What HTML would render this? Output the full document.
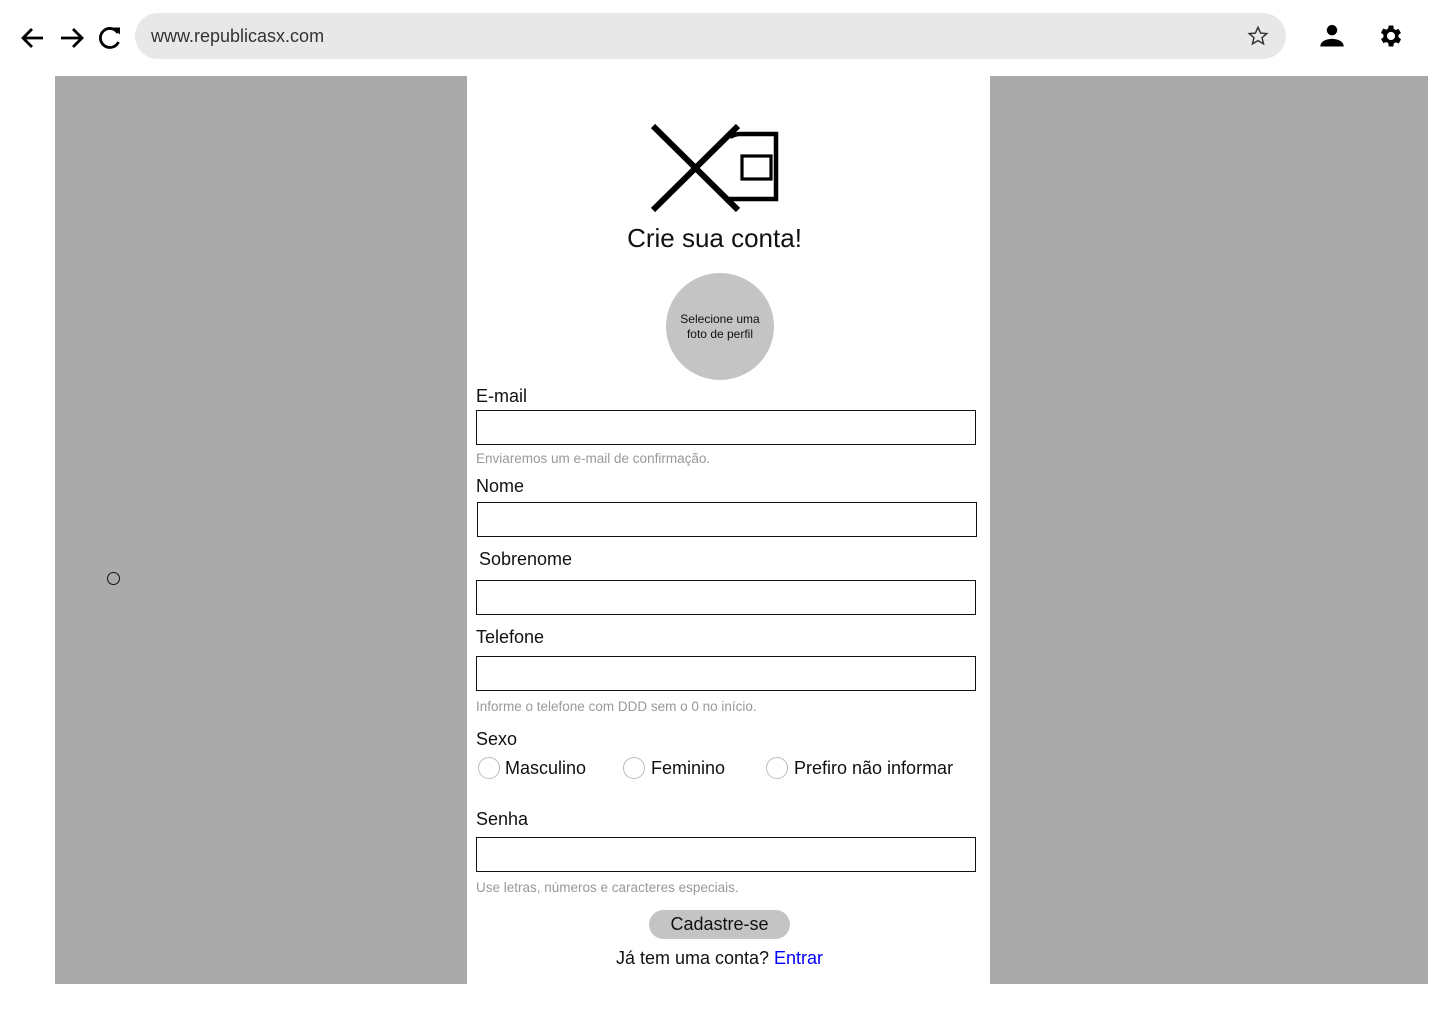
<!DOCTYPE html>
<html><head><meta charset="utf-8"><style>
*{margin:0;padding:0;box-sizing:border-box}
body{width:1440px;height:1024px;background:#fff;position:relative;font-family:"Liberation Sans",sans-serif;color:#111;overflow:hidden}
.a{position:absolute}
.url{left:135px;top:13px;width:1151px;height:46px;background:#e8e8e8;border-radius:23px}
.url span{position:absolute;left:16px;top:13px;font-size:18px;color:#333}
.gray{background:#aaa;top:76px;height:908px}
.lbl{font-size:18px}
.inp{border:1px solid #111;height:35px;width:500px;background:#fff}
.hint{font-size:13.5px;color:#999}
.rad{width:22px;height:22px;border:1px solid #bbb;border-radius:50%}
</style></head><body>
<svg class="a" style="left:20px;top:25px" width="105" height="26" viewBox="0 0 105 26">
<path d="M23 13H4M12 4L3 13l9 9" stroke="#000" stroke-width="2.8" fill="none"/>
<path d="M41 13h20M53 4l9 9-9 9" stroke="#000" stroke-width="2.8" fill="none"/>
<path d="M98 8A9.5 9.5 0 1 0 98.5 17" stroke="#000" stroke-width="2.8" fill="none"/><path d="M93 2.5h7v7z" fill="#000"/>
</svg>
<div class="a url"><span>www.republicasx.com</span></div>
<svg class="a" style="left:1247px;top:25px" width="22" height="22" viewBox="0 0 24 24"><path d="M12 2.5l2.8 6.3 6.8.6-5.2 4.5 1.6 6.7L12 17l-6 3.6 1.6-6.7L2.4 9.4l6.8-.6z" fill="none" stroke="#333" stroke-width="1.6"/></svg>
<svg class="a" style="left:1318px;top:22px" width="28" height="28" viewBox="0 0 24 24"><circle cx="12" cy="7" r="4.5"/><path d="M2 21c0-5 6-6.5 10-6.5s10 1.5 10 6.5z"/></svg>
<svg class="a" style="left:1377px;top:22px" width="28" height="28" viewBox="0 0 24 24"><path d="M19.4 13a7.5 7.5 0 0 0 0-2l2.1-1.6-2-3.5-2.5 1a7.6 7.6 0 0 0-1.7-1L15 3h-4l-.4 2.6a7.6 7.6 0 0 0-1.7 1l-2.5-1-2 3.5L6.6 11a7.5 7.5 0 0 0 0 2l-2.1 1.6 2 3.5 2.5-1a7.6 7.6 0 0 0 1.7 1L11 21h4l.4-2.6a7.6 7.6 0 0 0 1.7-1l2.5 1 2-3.5zM13 15.5a3.5 3.5 0 1 1 0-7 3.5 3.5 0 0 1 0 7z" transform="translate(-1 0)"/></svg>
<div class="a gray" style="left:55px;width:412px"></div>
<div class="a gray" style="left:990px;width:438px"></div>
<div class="a" style="left:107px;top:572px;width:13px;height:13px;border:1px solid #111;border-radius:50%"></div>
<svg class="a" style="left:640px;top:115px" width="150" height="110" viewBox="640 115 150 110">
<path d="M653 126L738 210M653 210L738 126" stroke="#000" stroke-width="6" fill="none"/>
<path d="M730 137Q735 134 740 134H776V199H728" stroke="#000" stroke-width="4.5" fill="none"/>
<rect x="742" y="156" width="29" height="23" stroke="#000" stroke-width="3.2" fill="none"/>
</svg>
<div class="a" style="left:453px;width:523px;top:223px;text-align:center;font-size:26px">Crie sua conta!</div>
<div class="a" style="left:666px;top:273px;width:108px;height:107px;border-radius:50%;background:#c4c4c4;font-size:12px;text-align:center;padding-top:39px;line-height:15px">Selecione uma<br>foto de perfil</div>
<div class="a lbl" style="left:476px;top:386px">E-mail</div>
<div class="a inp" style="left:476px;top:410px"></div>
<div class="a hint" style="left:476px;top:451px">Enviaremos um e-mail de confirmação.</div>
<div class="a lbl" style="left:476px;top:476px">Nome</div>
<div class="a inp" style="left:477px;top:502px"></div>
<div class="a lbl" style="left:479px;top:549px">Sobrenome</div>
<div class="a inp" style="left:476px;top:580px"></div>
<div class="a lbl" style="left:476px;top:627px">Telefone</div>
<div class="a inp" style="left:476px;top:656px"></div>
<div class="a hint" style="left:476px;top:699px">Informe o telefone com DDD sem o 0 no início.</div>
<div class="a lbl" style="left:476px;top:729px">Sexo</div>
<div class="a rad" style="left:478px;top:757px"></div><div class="a lbl" style="left:505px;top:758px">Masculino</div>
<div class="a rad" style="left:623px;top:757px"></div><div class="a lbl" style="left:651px;top:758px">Feminino</div>
<div class="a rad" style="left:766px;top:757px"></div><div class="a lbl" style="left:794px;top:758px">Prefiro não informar</div>
<div class="a lbl" style="left:476px;top:809px">Senha</div>
<div class="a inp" style="left:476px;top:837px"></div>
<div class="a hint" style="left:476px;top:880px">Use letras, números e caracteres especiais.</div>
<div class="a" style="left:649px;top:910px;width:141px;height:29px;border-radius:15px;background:#c4c4c4;text-align:center;font-size:18px;line-height:29px">Cadastre-se</div>
<div class="a lbl" style="left:467px;width:505px;top:948px;text-align:center">Já tem uma conta? <span style="color:#00f">Entrar</span></div>
</body></html>
